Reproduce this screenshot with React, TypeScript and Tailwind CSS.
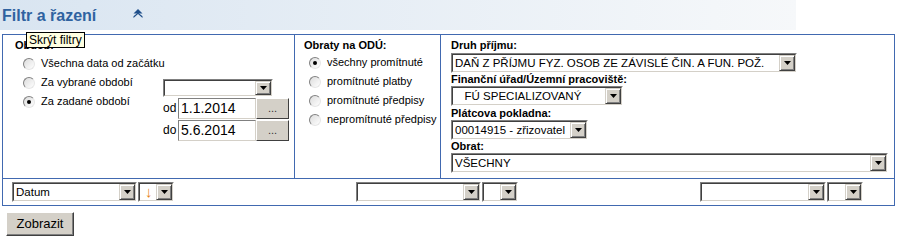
import React from "react";

const Arrow = () => (
  <svg width="7" height="4" viewBox="0 0 7 4">
    <path d="M0 0h7L3.5 4z" fill="#000" />
  </svg>
);

const Select = ({
  className,
  value,
  arrow,
}: {
  className: string;
  value?: string;
  arrow?: boolean;
}) => (
  <div
    className={`flex border border-t-[#808080] border-l-[#808080] border-b-white border-r-white ${className}`}
  >
    <div className="flex flex-1 min-w-0 border border-t-[#404040] border-l-[#404040] border-b-[#d4d0c8] border-r-[#d4d0c8] bg-white">
      <div className="flex-1 min-w-0 overflow-hidden whitespace-pre pl-[2px] text-[11.5px] leading-[16px] text-black font-['Liberation_Sans',Arial,sans-serif]">
        {arrow ? (
          <span className="pl-[3px] text-[15px] leading-[16px] font-bold text-[#e8841c]">↓</span>
        ) : (
          value
        )}
      </div>
      <div className="flex w-[16px] items-center justify-center border border-t-[#d4d0c8] border-l-[#d4d0c8] border-b-[#404040] border-r-[#404040] bg-[#d4d0c8] shadow-[inset_1px_1px_0_#fff,inset_-1px_-1px_0_#808080]">
        <Arrow />
      </div>
    </div>
  </div>
);

const Radio = ({ checked }: { checked?: boolean }) => (
  <span className="flex h-[12px] w-[12px] shrink-0 items-center justify-center rounded-full border border-t-[#808080] border-l-[#808080] border-b-[#e6e6e6] border-r-[#e6e6e6] bg-gradient-to-br from-[#dcdcdc] to-white">
    {checked && <span className="h-[4px] w-[4px] rounded-full bg-black" />}
  </span>
);

const RadioRow = ({ label, checked }: { label: string; checked?: boolean }) => (
  <div className="flex h-[19px] items-center gap-[6px]">
    <Radio checked={checked} />
    <span className="whitespace-nowrap text-[11px] text-black">{label}</span>
  </div>
);

const DateRow = ({ label, value }: { label: string; value: string }) => (
  <div className="flex h-[22px] items-center">
    <span className="w-[15px] text-[12px] text-black">{label}</span>
    <div className="flex h-[21px] w-[78px] items-center border border-t-[#808080] border-l-[#808080] border-b-[#d4d0c8] border-r-[#d4d0c8] bg-white pl-[2px] text-[14px] text-black">
      {value}
    </div>
    <button className="h-[21px] w-[33px] border border-t-white border-l-white border-b-[#404040] border-r-[#404040] bg-[#d4d0c8] text-[11px] leading-[10px] text-[#333]">
      ...
    </button>
  </div>
);

const Label = ({ children, className = "" }: { children: React.ReactNode; className?: string }) => (
  <div className={`h-[13px] whitespace-nowrap text-[11px] leading-[13px] font-bold text-black ${className}`}>
    {children}
  </div>
);

export default function App() {
  return (
    <div className="w-[913px] h-[248px] bg-white font-['Liberation_Sans',Arial,sans-serif]">
      <div className="flex h-[30px] w-[796px] items-center bg-gradient-to-r from-[#d9e5f1] to-[#f6f8fa]">
        <h2 className="pl-[2px] pt-[2px] text-[16px] font-bold text-[#2f62a0]">
          Filtr a řazení
        </h2>
        <svg className="ml-[37px] mb-[3px]" width="10" height="9" viewBox="0 0 10 9">
          <path d="M5 0L9.5 4.5H0.5z" fill="#1f4f8a" />
          <path d="M0.5 9L5 5L9.5 9V7.3L5 3.6L0.5 7.3z" fill="#1f4f8a" />
        </svg>
      </div>

      <div className="relative ml-[2px] mt-[4px] w-[893px] border border-[#4169b0]">
        <div className="absolute left-[23px] top-[-3px] z-10 border border-black bg-[#ffffe1] px-[2px] text-[12px] leading-[14px] text-black">
          Skrýt filtry
        </div>

        <div className="grid h-[143px] grid-cols-[292px_146px_1fr]">
          <div className="flex border-r border-[#4169b0] pl-[12px] pt-[4px]">
            <div className="w-[148px]">
              <Label>Období</Label>
              <div className="mt-[2px] pl-[8px]">
                <RadioRow label="Všechna data od začátku" />
                <RadioRow label="Za vybrané období" />
                <RadioRow label="Za zadané období" checked />
              </div>
            </div>
            <div className="pt-[40px]">
              <Select className="h-[18px] w-[110px]" value="" />
              <div>
                <DateRow label="od" value="1.1.2014" />
                <DateRow label="do" value="5.6.2014" />
              </div>
            </div>
          </div>

          <div className="border-r border-[#4169b0] pl-[9px] pt-[4px]">
            <Label>Obraty na ODÚ:</Label>
            <div className="mt-[1px] pl-[5px]">
              <RadioRow label="všechny promítnuté" checked />
              <RadioRow label="promítnuté platby" />
              <RadioRow label="promítnuté předpisy" />
              <RadioRow label="nepromítnuté předpisy" />
            </div>
          </div>

          <div className="pl-[10px] pt-[4px]">
            <Label>Druh příjmu:</Label>
            <Select
              className="mt-[1px] h-[20px] w-[346px]"
              value="DAŇ Z PŘÍJMU FYZ. OSOB ZE ZÁVISLÉ ČIN. A FUN. POŽ."
            />
            <Label>Finanční úřad/Územní pracoviště:</Label>
            <Select className="h-[20px] w-[172px]" value="   FÚ SPECIALIZOVANÝ" />
            <Label className="mt-[1px]">Plátcova pokladna:</Label>
            <Select className="h-[20px] w-[137px]" value="00014915 - zřizovatel" />
            <Label>Obrat:</Label>
            <Select className="h-[20px] w-[437px]" value="VŠECHNY" />
          </div>
        </div>

        <div className="flex h-[27px] items-center gap-[182px] border-t border-[#4169b0] pl-[9px]">
          <div className="flex gap-[1px]">
            <Select className="h-[20px] w-[125px]" value="Datum" />
            <Select className="h-[20px] w-[36px]" arrow />
          </div>
          <div className="flex gap-[1px]">
            <Select className="h-[20px] w-[125px]" value="" />
            <Select className="h-[20px] w-[36px]" value="" />
          </div>
          <div className="flex gap-[1px]">
            <Select className="h-[20px] w-[126px]" value="" />
            <Select className="h-[20px] w-[36px]" value="" />
          </div>
        </div>
      </div>

      <button className="ml-[6px] mt-[6px] h-[24px] w-[68px] border border-t-white border-l-white border-b-[#404040] border-r-[#404040] bg-[#d4d0c8] text-[13px] text-black shadow-[inset_-1px_-1px_0_#808080]">
        Zobrazit
      </button>
    </div>
  );
}
